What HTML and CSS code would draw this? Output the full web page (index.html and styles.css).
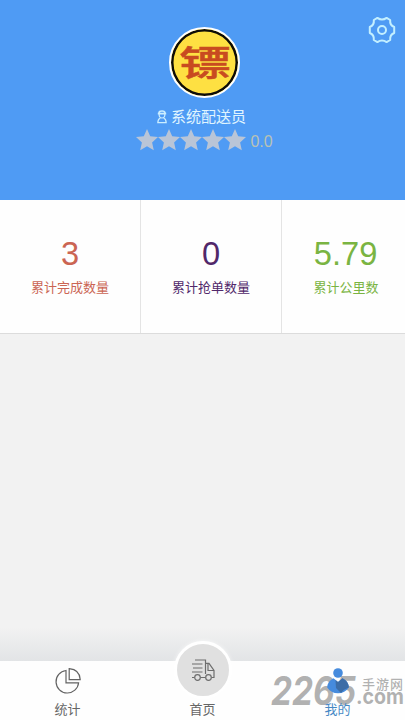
FILE: index.html
```html
<!DOCTYPE html>
<html lang="zh-CN">
<head>
<meta charset="utf-8">
<title>我的</title>
<link rel="stylesheet" href="styles.css">
</head>
<body>
<div class="app">
  <header class="profile">
    <svg class="settings" viewBox="0 0 28 28" fill="none" stroke="#c3efff" stroke-width="2" stroke-linejoin="round">
      <path d="M9.4 1.9 Q14 5.2 18.6 1.9 L22.2 4 Q21.6 9.2 26.2 11 V17 Q21.6 18.8 22.2 24 L18.6 26.1 Q14 22.8 9.4 26.1 L5.8 24 Q6.4 18.8 1.8 17 V11 Q6.4 9.2 5.8 4 Z"/>
      <circle cx="14" cy="14" r="4"/>
    </svg>
    <div class="avatar"><span class="avatar-text">镖</span></div>
    <div class="name">
      <svg class="courier" viewBox="0 0 12 14" fill="none" stroke="#cbeeff" stroke-width="1.2">
        <path d="M3 3.2 Q3 1 6 1 Q9 1 9 3.2 M1.8 3.6 H10.2" stroke-width="1.7"/>
        <path d="M3.2 4 V5.5 Q3.5 8 6 8 Q8.5 8 8.8 5.5 V4 M4.3 8 Q2 9 1.8 12.6 H10.2 Q10 9 7.7 8"/>
      </svg>
      <span>系统配送员</span>
    </div>
    <div class="rating">
      <svg class="stars" viewBox="0 0 110 22" fill="#b9c5d7">
        <defs><path id="star" d="M11 0 L14.2 7.3 L22 8.1 L16.1 13.4 L17.8 21.2 L11 17.2 L4.2 21.2 L5.9 13.4 L0 8.1 L7.8 7.3 Z"/></defs>
        <use href="#star"/><use href="#star" x="22"/><use href="#star" x="44"/><use href="#star" x="66"/><use href="#star" x="88"/>
      </svg>
      <span class="score">0.0</span>
    </div>
  </header>
  <section class="stats">
    <div class="stat done"><b>3</b><span>累计完成数量</span></div>
    <div class="stat grabbed"><b>0</b><span>累计抢单数量</span></div>
    <div class="stat distance"><b>5.79</b><span>累计公里数</span></div>
  </section>
  <main class="content"></main>
  <nav class="tabs">
    <div class="tab">
      <svg class="pie" viewBox="0 0 26 26" fill="none" stroke="#626262" stroke-width="1.2">
        <path d="M11 2.5 A11.3 11.3 0 1 0 23.6 14.8 H11 Z"/>
        <path d="M14.2 .7 V11.6 H25.2 Q24.8 1.7 14.2 .7 Z"/>
      </svg>
      <span>统计</span>
    </div>
    <div class="tab home">
      <div class="bubble">
        <svg class="truck" viewBox="0 0 24 22" fill="none" stroke="#6d6d6d" stroke-width="1.2">
          <path d="M4 1 H14.5 V15 M1 5 H11.5 M2 9 H11.5 M1 13 H11.5 M14.5 4.3 H18 L23 11.5 V18.5 H20.5 M17 5 V11.5 H23 M1 18.5 H3.5 M9.5 18.5 H14.5"/>
          <circle cx="6.5" cy="18.5" r="2.8"/><circle cx="17.5" cy="18.5" r="2.8"/>
        </svg>
      </div>
      <span>首页</span>
    </div>
    <div class="tab active">
      <svg class="person" viewBox="0 0 24 26">
        <circle cx="12" cy="5" r="4.8" fill="#468bdd"/>
        <path d="M7.5 10.2 L12 14 L16.5 10.2 Q22.5 13 22.8 19.5 Q19 25.3 12 25.3 Q5 25.3 1.2 19.5 Q1.5 13 7.5 10.2Z" fill="#468bdd"/>
        <path d="M9.5 12 L12 14 L16.5 10.2 Q22.5 13 22.8 19.5 Q18 21 15 25 L10 20Z" fill="#3d6da6"/>
      </svg>
      <span>我的</span>
    </div>
  </nav>
  <svg class="watermark" viewBox="0 0 134 36">
    <text x="0" y="30.5" class="mark-number" textLength="85" lengthAdjust="spacingAndGlyphs">2265</text>
    <text x="85" y="30" class="mark-domain" textLength="48" lengthAdjust="spacingAndGlyphs">.com</text>
    <text x="91" y="14.5" class="mark-name" textLength="41">手游网</text>
  </svg>
</div>
</body>
</html>
```
FILE: styles.css
```css
* { box-sizing: border-box; }
body {
  margin: 0;
  font-family: "Liberation Sans", "Noto Sans CJK SC", sans-serif;
}
.app {
  position: relative;
  width: 405px;
  height: 720px;
  display: flex;
  flex-direction: column;
  background: #f2f2f2;
  overflow: hidden;
}
.profile {
  position: relative;
  height: 200px;
  padding: 27px 0 0 3px;
  display: flex;
  flex-direction: column;
  align-items: center;
  background: #4f9bf4;
}
.settings {
  position: absolute;
  top: 16px;
  right: 9px;
  width: 28px;
  height: 28px;
}
.avatar {
  width: 71px;
  height: 71px;
  border: 2px solid #fff;
  border-radius: 50%;
  background: #fee042;
  box-shadow: inset 0 0 0 2.5px #0d0c08;
  display: flex;
  align-items: center;
  justify-content: center;
}
.avatar-text {
  font: 500 40px/1 "Noto Sans CJK SC", sans-serif;
  color: #c84b20;
  -webkit-text-stroke: .5px #c84b20;
  transform: translate(1px, -2px) scale(1.3, .87);
}
.name {
  height: 22px;
  margin: 8px 6px 0 0;
  display: flex;
  align-items: center;
  gap: 3px;
  color: #e0f5ff;
  font-size: 15px;
  line-height: 22px;
}
.courier { width: 12px; height: 14px; }
.rating {
  margin: 1px 0 0 1px;
  display: flex;
  align-items: center;
  gap: 4px;
}
.stars { width: 110px; height: 22px; }
.score {
  font-size: 16px;
  line-height: 22px;
  color: #b9c2b4;
  transform: translateY(2px);
}
.stats {
  height: 134px;
  display: grid;
  grid-template-columns: 141px 141px 1fr;
  background: #fefefe;
  border-bottom: 1px solid #dcdcdc;
}
.stat {
  padding-top: 33px;
  display: flex;
  flex-direction: column;
  align-items: center;
  border-right: 1px solid #e4e4e4;
}
.stat b {
  font-size: 34px;
  font-weight: 400;
  line-height: 40px;
  transform: translateX(-.5px) scaleX(.96);
}
.stat span {
  margin-top: 4px;
  font-size: 13px;
  line-height: 22px;
}
.done { color: #cb6553; }
.grabbed { color: #51286a; }
.distance { color: #7ab442; padding-left: 5px; border-right: 0; }
.content {
  flex: 1;
  background: linear-gradient(#f2f2f2 0, #f2f2f2 calc(100% - 34px), #e2e4e6 100%);
}
.tabs {
  height: 59px;
  display: grid;
  grid-template-columns: repeat(3, 135px);
  grid-template-rows: 59px;
  background: #fefefe;
}
.tab {
  display: flex;
  flex-direction: column;
  align-items: center;
  justify-content: flex-end;
  color: #666;
  font-size: 13px;
  line-height: 20px;
}
.pie { width: 26px; height: 26px; margin-bottom: 6px; }
.bubble {
  flex: none;
  width: 58px;
  height: 58px;
  margin: 0 0 1px 1px;
  border: 3.5px solid #fff;
  border-radius: 50%;
  background: #e0e0e0;
  box-shadow: 0 0 4px rgba(255, 255, 255, .7);
  display: flex;
  align-items: center;
  justify-content: center;
}
.truck { width: 24px; height: 22px; }
.active { color: #4789c5; }
.active span { position: relative; z-index: 2; }
.person {
  position: relative;
  z-index: 2;
  width: 24px;
  height: 26px;
  margin: 0 0 6px 1px;
}
.watermark {
  position: absolute;
  left: 271px;
  top: 674px;
  width: 134px;
  height: 36px;
  fill: rgba(125, 125, 125, .6);
}
.mark-number { font: italic 700 39px Inter, sans-serif; }
.mark-domain { font: 700 21px Inter, sans-serif; }
.mark-name { font: 500 13px "Noto Sans CJK SC", sans-serif; }
```
